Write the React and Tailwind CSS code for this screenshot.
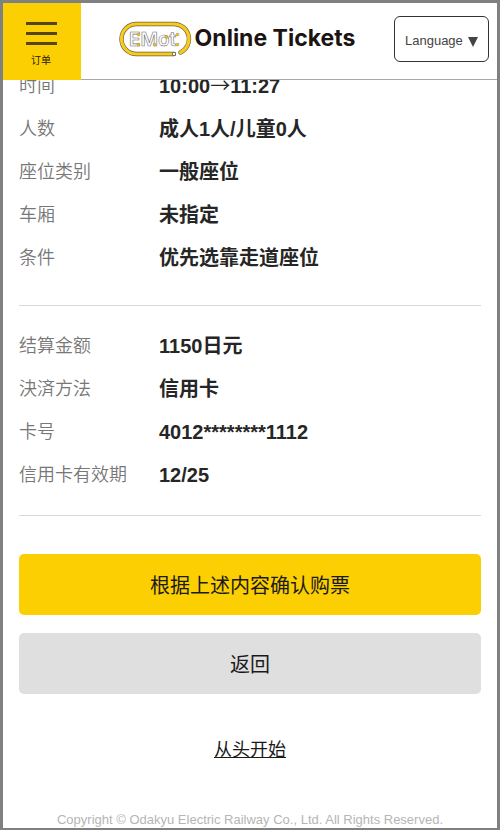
import clsx from 'clsx';

const tripRows = [
  { label: '时间', from: '10:00', to: '11:27' },
  { label: '人数', value: '成人1人/儿童0人' },
  { label: '座位类别', value: '一般座位' },
  { label: '车厢', value: '未指定' },
  { label: '条件', value: '优先选靠走道座位' },
];

const paymentRows = [
  { label: '结算金额', value: '1150日元' },
  { label: '決済方法', value: '信用卡' },
  { label: '卡号', value: '4012********1112' },
  { label: '信用卡有效期', value: '12/25' },
];

const EmotLogo = () => (
  <svg width="74" height="38" viewBox="0 0 74 38" role="img" aria-label="EMot">
    {/* rail loop: dark edge, then yellow on top */}
    <g fill="none" strokeLinecap="round">
      <path d="M56 35 H18.5 A15 15 0 0 1 18.5 5 H56 A15 15 0 0 1 62.5 33.5" stroke="#6b6040" strokeWidth="4.4" />
      <path d="M56 35 H18.5 A15 15 0 0 1 18.5 5 H56 A15 15 0 0 1 62.5 33.5" stroke="#f7ca1d" strokeWidth="3.2" />
    </g>
    <circle cx="56" cy="35" r="1.7" fill="#fff" stroke="#4a4228" strokeWidth="0.7" />
    <text
      x="11"
      y="27"
      fontFamily="Inter, sans-serif"
      fontSize="19"
      fontWeight="600"
      fill="#fff"
      stroke="#77726c"
      strokeWidth="0.6"
    >
      EMot
    </text>
    <g fill="#f2c21a" stroke="#6b6040" strokeWidth="0.3">
      <circle cx="20.5" cy="15.5" r="1.5" />
      <circle cx="20.5" cy="25.5" r="1.5" />
      <circle cx="36.5" cy="25.5" r="1.5" />
      <circle cx="48.5" cy="18" r="1.5" />
      <circle cx="59.5" cy="15.5" r="1.5" />
      <circle cx="59.5" cy="25.5" r="1.5" />
    </g>
  </svg>
);

const Header = () => (
  <header className="sticky top-0 z-10 flex h-[77px] items-start justify-between border-b border-[#a8a8a8] bg-white pr-2">
    <button
      type="button"
      className="flex h-[77px] w-[78px] shrink-0 flex-col items-center bg-[#fbcf02] pt-[19px] pr-[2px] text-[#1f1a05]"
    >
      <span className="flex flex-col gap-[7px]">
        <span className="h-[3px] w-[31px] bg-[#54461a]" />
        <span className="h-[3px] w-[31px] bg-[#54461a]" />
        <span className="h-[3px] w-[31px] bg-[#54461a]" />
      </span>
      <span className="mt-2 text-[10px] leading-4">订单</span>
    </button>
    <h1 className="flex h-[70px] items-center gap-[3px] pr-[2px]">
      <EmotLogo />
      <span className="font-[Inter,sans-serif] text-[23px] font-bold whitespace-nowrap text-[#1c1412]">
        Online Tickets
      </span>
    </h1>
    <div className="relative mt-[13px]">
      <select
        aria-label="Language"
        className="h-[46px] w-[95px] appearance-none rounded-md border border-[#333] bg-white pt-[3px] pl-[10px] text-[13px] text-[#444]"
      >
        <option>Language</option>
      </select>
      <svg
        className="pointer-events-none absolute top-[21px] right-[11px]"
        width="10"
        height="10"
        viewBox="0 0 10 10"
        aria-hidden="true"
      >
        <path d="M0 0 H10 L5 10 Z" fill="#444" />
      </svg>
    </div>
  </header>
);

const DetailList = ({ rows, className }) => (
  <dl className={clsx('border-b border-[#d9d9d9]', className)}>
    {rows.map((row) => (
      <div key={row.label} className="flex h-[43px] items-center">
        <dt className="w-[140px] shrink-0 pt-[2px] text-[18px] font-[350] text-[#777]">{row.label}</dt>
        <dd className="text-[20px] font-bold text-[#262626]">
          {row.from ? (
            <>
              {row.from}
              <span className="font-['Noto_Sans_CJK_JP',sans-serif] leading-none font-normal">→</span>
              {row.to}
            </>
          ) : (
            row.value
          )}
        </dd>
      </div>
    ))}
  </dl>
);

const App = () => {
  return (
    <div
      lang="zh-CN"
      className="min-h-screen border-3 border-[#808080] bg-white font-['Liberation_Sans','Noto_Sans_CJK_SC',sans-serif]"
    >
      <Header />

      {/* list is scrolled a little way under the header */}
      <main className="-mt-4 px-4">
        <DetailList rows={tripRows} className="pb-[26px]" />
        <DetailList rows={paymentRows} className="pt-[18px] pb-[19px]" />

        <div className="mt-[38px] flex flex-col gap-[18px]">
          <button type="button" className="h-[61px] rounded-[5px] bg-[#fbcf02] pt-[2px] text-[20px] text-[#1a1a1a]">
            根据上述内容确认购票
          </button>
          <button type="button" className="h-[61px] rounded-[5px] bg-[#dfdfdf] pt-[2px] text-[20px] text-[#1a1a1a]">
            返回
          </button>
        </div>

        <p className="mt-[42px] text-center text-[18px] leading-7">
          <a href="#" className="text-[#1a1a1a] underline">
            从头开始
          </a>
        </p>
      </main>

      <footer className="mt-12 text-center text-[13px] leading-4 text-[#b5b5b5]">
        Copyright © Odakyu Electric Railway Co., Ltd. All Rights Reserved.
      </footer>
    </div>
  );
};

export default App;
